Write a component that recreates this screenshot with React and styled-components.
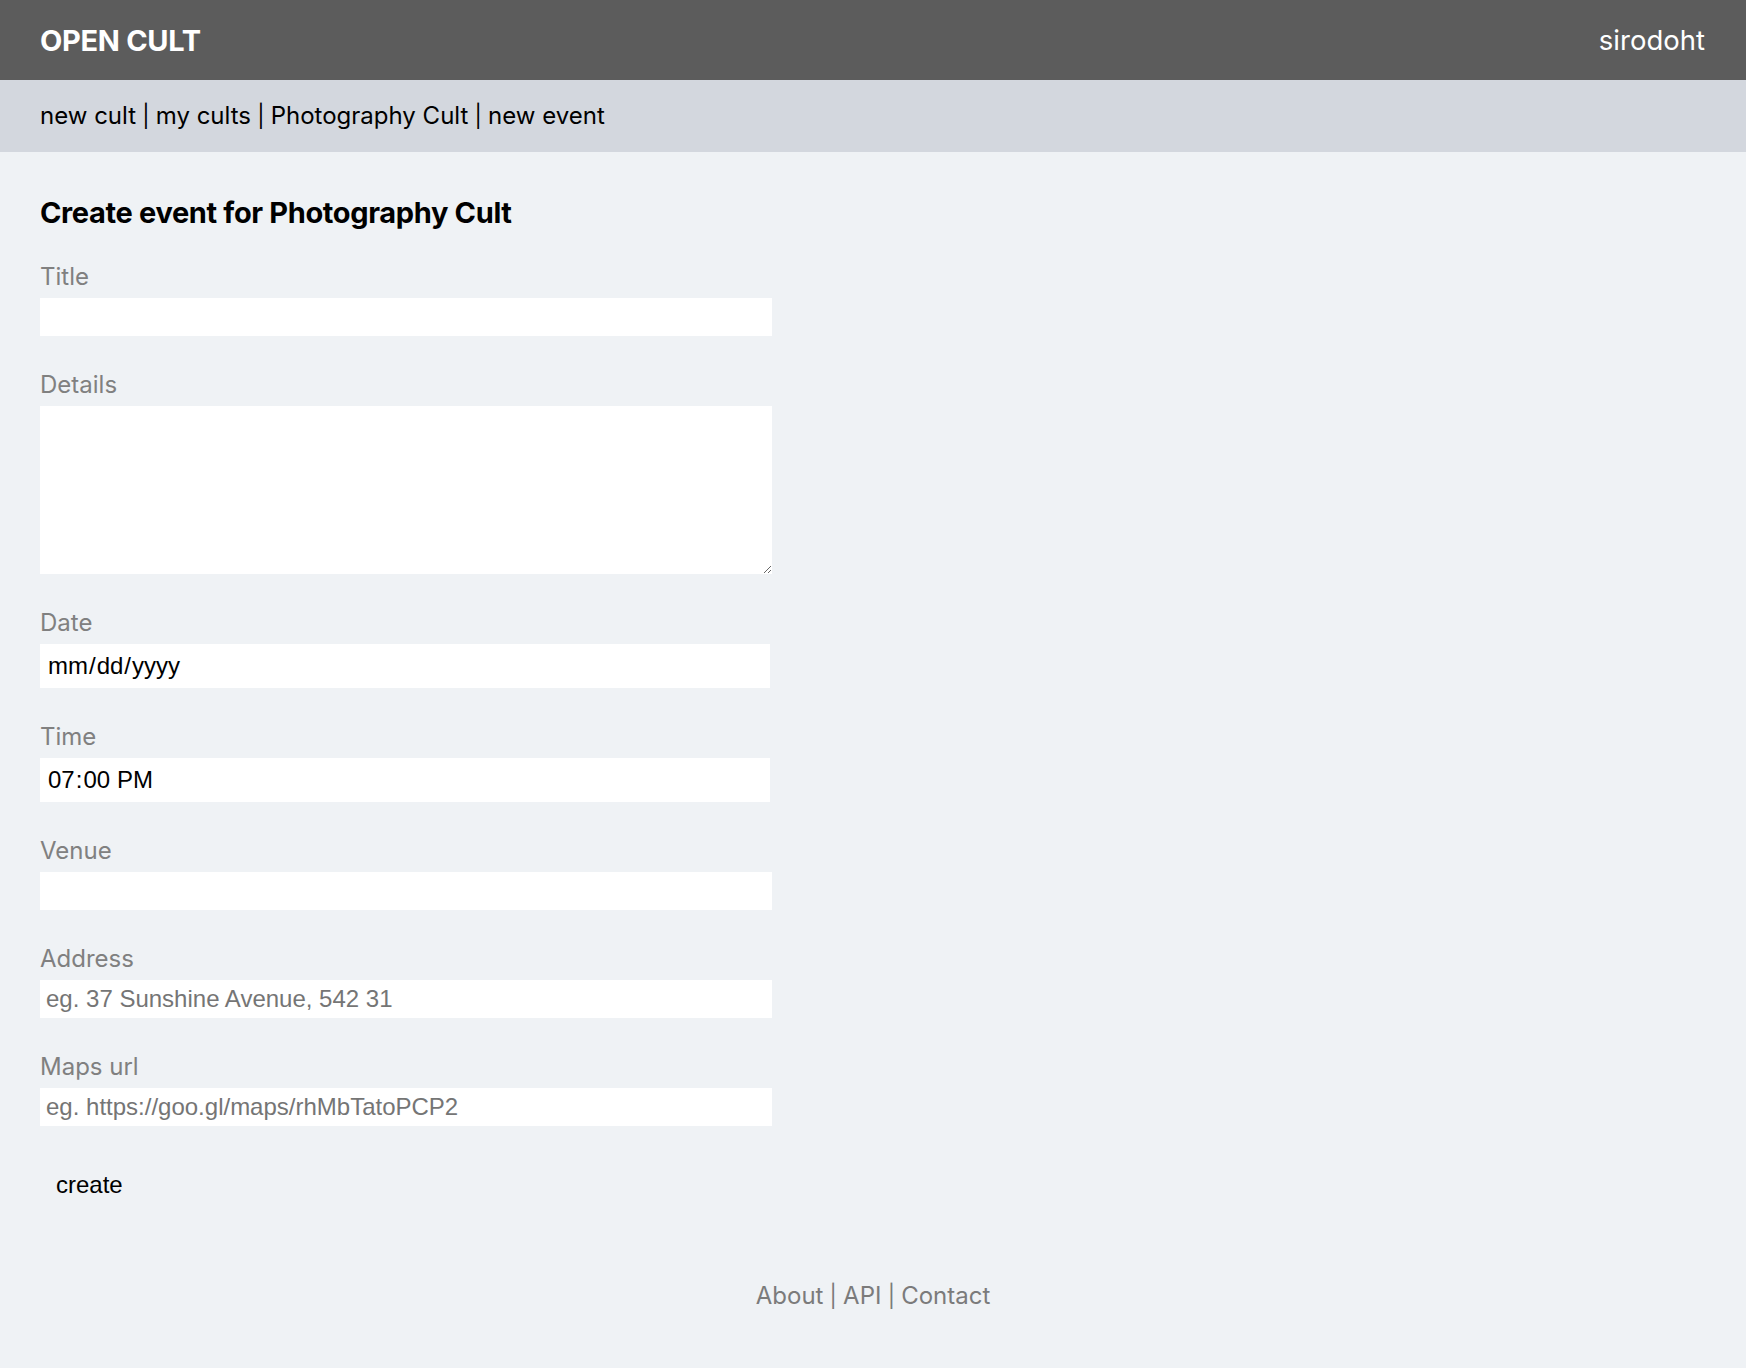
import React from "react";
import styled, { createGlobalStyle } from "styled-components";

const GlobalStyle = createGlobalStyle`
    html, body {
        margin: 0;
        padding: 0;
        background-color: #eff2f5;
    }
    body {
        font-family: Inter, "Noto Sans", sans-serif;
        min-height: 1368px;
    }
`;

const fields = [
    { label: "Title", kind: "text" },
    { label: "Details", kind: "textarea" },
    { label: "Date", kind: "date" },
    { label: "Time", kind: "time", value: "19:00" },
    { label: "Venue", kind: "text" },
    { label: "Address", kind: "text", placeholder: "eg. 37 Sunshine Avenue, 542 31" },
    { label: "Maps url", kind: "text", placeholder: "eg. https://goo.gl/maps/rhMbTatoPCP2" },
];

const App = () => {
    return (
        <>
            <GlobalStyle />
            <Header>
                <Logo>OPEN CULT</Logo>
                <User>sirodoht</User>
            </Header>
            <SubNav>
                <NavLink>new cult</NavLink>
                <Sep>|</Sep>
                <NavLink>my cults</NavLink>
                <Sep>|</Sep>
                <NavLink>Photography Cult</NavLink>
                <Sep>|</Sep>
                <NavLink>new event</NavLink>
            </SubNav>
            <Main>
                <Heading>Create event for Photography Cult</Heading>
                <Form onSubmit={(e) => e.preventDefault()}>
                    {fields.map((f) => (
                        <Field key={f.label}>
                            <Label>{f.label}</Label>
                            {f.kind === "textarea" ? (
                                <TextArea />
                            ) : f.kind === "date" || f.kind === "time" ? (
                                <DateInput type={f.kind} defaultValue={f.value} />
                            ) : (
                                <TextInput type="text" placeholder={f.placeholder} />
                            )}
                        </Field>
                    ))}
                    <SubmitButton type="submit">create</SubmitButton>
                </Form>
            </Main>
            <Footer>
                <FooterLink>About</FooterLink>
                <Sep>|</Sep>
                <FooterLink>API</FooterLink>
                <Sep>|</Sep>
                <FooterLink>Contact</FooterLink>
            </Footer>
        </>
    );
};

export default App;

const Header = styled.header`
    display: flex;
    justify-content: space-between;
    align-items: center;
    height: 80px;
    padding: 0 41px 0 40px;
    background-color: #5c5c5c;
    color: #fff;
`;

const Logo = styled.div`
    font-size: 29px;
    font-weight: 700;
    line-height: 35px;
    letter-spacing: -0.3px;
`;

const User = styled.div`
    font-size: 27.5px;
    line-height: 35px;
`;

const SubNav = styled.nav`
    display: flex;
    align-items: center;
    height: 72px;
    padding: 0 40px;
    background-color: #d3d7de;
    font-size: 24px;
    line-height: 28px;
    color: #000;
`;

const NavLink = styled.span`
    cursor: pointer;
`;

const Sep = styled.span`
    margin: 0 0.28em;
    font-size: 0.92em;
`;

const Main = styled.main`
    padding: 43px 40px 0;
`;

const Heading = styled.h1`
    margin: 0 0 33px;
    font-size: 29px;
    line-height: 35px;
    font-weight: 700;
    letter-spacing: -0.35px;
    color: #000;
`;

const Form = styled.form`
    display: flex;
    flex-direction: column;
    align-items: flex-start;
    gap: 35px;
`;

const Field = styled.div`
    display: flex;
    flex-direction: column;
    gap: 7px;
`;

const Label = styled.label`
    font-size: 24px;
    line-height: 28px;
    color: #808080;
`;

const TextInput = styled.input`
    box-sizing: border-box;
    width: 732px;
    height: 38px;
    padding: 0 6px;
    border: none;
    outline: none;
    background: #fff;
    font-family: "Liberation Sans", Arial, sans-serif;
    font-size: 24px;
    color: #000;
    &::placeholder {
        color: #757575;
    }
`;

const DateInput = styled.input`
    box-sizing: border-box;
    width: 730px;
    height: 44px;
    padding: 0 7px;
    border: none;
    outline: none;
    background: #fff;
    font-family: "Liberation Sans", Arial, sans-serif;
    font-size: 24px;
    color: #000;
    &::-webkit-calendar-picker-indicator {
        display: none;
    }
`;

const TextArea = styled.textarea`
    box-sizing: border-box;
    display: block;
    width: 732px;
    height: 168px;
    padding: 6px;
    border: none;
    outline: none;
    background: #fff;
    font-family: "Liberation Sans", Arial, sans-serif;
    font-size: 24px;
`;

const SubmitButton = styled.button`
    margin-top: 0;
    padding: 10px 16px;
    border: none;
    background: transparent;
    font-family: "Liberation Sans", Arial, sans-serif;
    font-size: 24px;
    line-height: 28px;
    color: #000;
    cursor: pointer;
`;

const Footer = styled.footer`
    display: flex;
    justify-content: center;
    padding: 73px 0 60px;
    font-size: 24px;
    line-height: 28px;
    color: #7b7b7b;
`;

const FooterLink = styled.span`
    cursor: pointer;
`;
